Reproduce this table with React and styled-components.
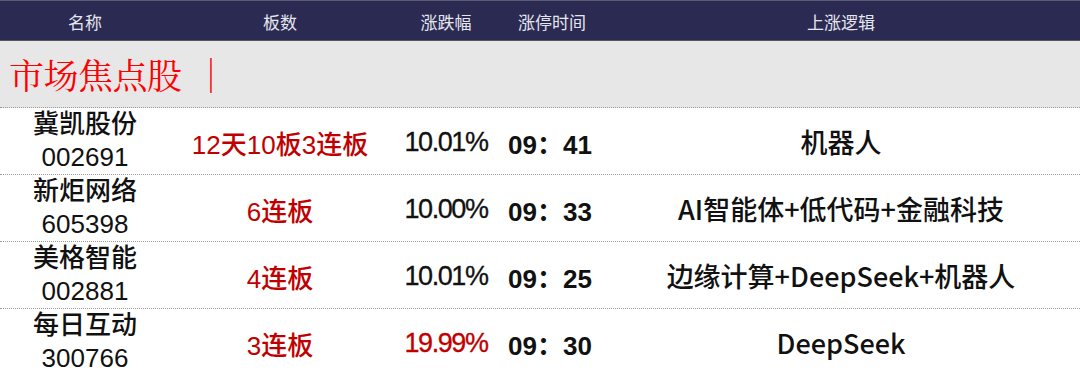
import React from "react";
import styled, { createGlobalStyle } from "styled-components";

const GlobalStyle = createGlobalStyle`
  html, body {
    margin: 0;
    padding: 0;
    background: #ffffff;
  }
  body {
    font-family: "Liberation Sans", "Noto Sans CJK SC", sans-serif;
  }
`;

const COLS = "170px 220px 112px 100px 478px";

const rows = [
  { name: "冀凯股份", code: "002691", board: "12天10板3连板", pct: "10.01%", up: false, time: "09：41", logic: "机器人" },
  { name: "新炬网络", code: "605398", board: "6连板", pct: "10.00%", up: false, time: "09：33", logic: "AI智能体+低代码+金融科技" },
  { name: "美格智能", code: "002881", board: "4连板", pct: "10.01%", up: false, time: "09：25", logic: "边缘计算+DeepSeek+机器人" },
  { name: "每日互动", code: "300766", board: "3连板", pct: "19.99%", up: true, time: "09：30", logic: "DeepSeek" },
];

const Table = styled.div`
  width: 1080px;
  height: 373px;
  overflow: hidden;
  background: #ffffff;
`;

const Header = styled.div`
  display: grid;
  grid-template-columns: ${COLS};
  height: 39px;
  align-items: center;
  background: #2b2a52;
  border-top: 1px solid #5b5a72;
  border-bottom: 1px solid #55555f;
`;

const HeadCell = styled.div`
  text-align: center;
  color: #e6e6ee;
  font-family: "Noto Sans CJK SC", sans-serif;
  font-size: 17px;
  line-height: 1;
  padding-top: 2px;
`;

const Section = styled.div`
  height: 66px;
  background: #e7e7e7;
  display: flex;
  align-items: center;
  padding-left: 9px;
  border-bottom: 1px dotted #9a9a9a;
`;

const SectionTitle = styled.div`
  color: #ff0000;
  font-family: "Noto Serif CJK SC", "Noto Sans CJK SC", serif;
  font-size: 35px;
  line-height: 1;
  letter-spacing: -0.5px;
`;

const Bar = styled.span`
  margin-left: 12px;
`;

const Row = styled.div`
  display: grid;
  grid-template-columns: ${COLS};
  height: 66px;
  align-items: center;
  border-bottom: 1px dotted #9a9a9a;

  &:last-child {
    border-bottom: none;
  }
`;

const NameCell = styled.div`
  text-align: center;
  font-size: 26px;
  font-weight: 500;
  line-height: 33px;
  color: #111;
  font-family: "Liberation Sans", "Noto Sans CJK SC", sans-serif;
`;

const BoardCell = styled.div`
  text-align: center;
  font-size: 26px;
  font-weight: 500;
  color: #c00000;
  padding-top: 2px;
  font-family: "Liberation Sans", "Noto Sans CJK SC", sans-serif;
`;

const PctCell = styled.div`
  text-align: center;
  font-size: 27px;
  letter-spacing: -1.4px;
  padding-top: 3px;
  -webkit-text-stroke: 0.3px currentColor;
  color: ${(p) => (p.$up ? "#c00000" : "#111")};
  font-family: "Liberation Sans", sans-serif;
`;

const TimeCell = styled.div`
  text-align: center;
  font-size: 26px;
  font-weight: 700;
  padding-top: 2px;
  padding-right: 4px;
  color: #111;
  font-family: "Liberation Sans", "Noto Sans CJK SC", sans-serif;
`;

const LogicCell = styled.div`
  text-align: center;
  font-size: 27px;
  font-weight: 500;
  color: #111;
  font-family: "Noto Sans CJK SC", sans-serif;
`;

export default function App() {
  return (
    <>
      <GlobalStyle />
      <Table>
        <Header>
          <HeadCell>名称</HeadCell>
          <HeadCell>板数</HeadCell>
          <HeadCell>涨跌幅</HeadCell>
          <HeadCell>涨停时间</HeadCell>
          <HeadCell>上涨逻辑</HeadCell>
        </Header>
        <Section>
          <SectionTitle>
            市场焦点股<Bar>｜</Bar>
          </SectionTitle>
        </Section>
        {rows.map((r) => (
          <Row key={r.code}>
            <NameCell>
              {r.name}
              <br />
              {r.code}
            </NameCell>
            <BoardCell>{r.board}</BoardCell>
            <PctCell $up={r.up}>{r.pct}</PctCell>
            <TimeCell>{r.time}</TimeCell>
            <LogicCell>{r.logic}</LogicCell>
          </Row>
        ))}
      </Table>
    </>
  );
}
